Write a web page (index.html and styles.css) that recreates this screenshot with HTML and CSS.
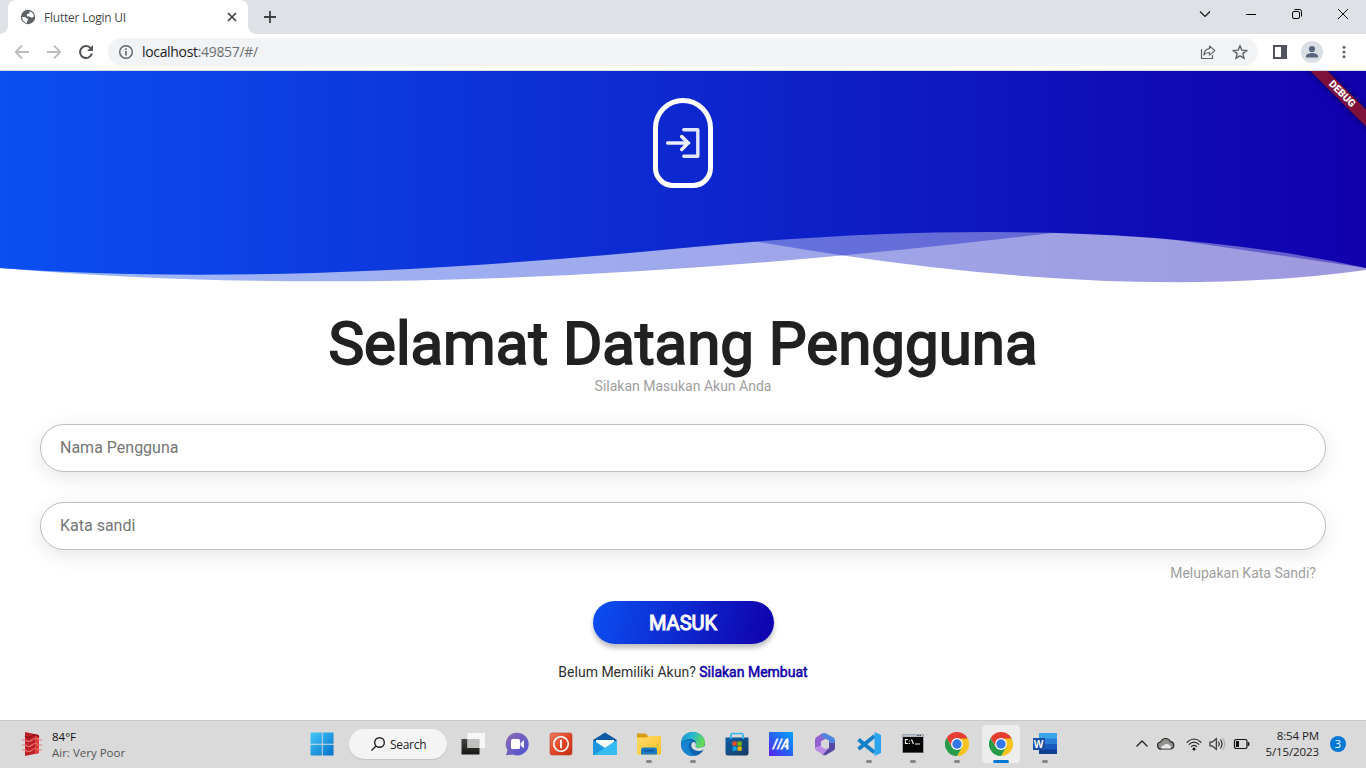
FILE: index.html
```html
<!DOCTYPE html>
<html lang="id">
<head>
<meta charset="utf-8">
<title>Flutter Login UI</title>
<link rel="stylesheet" href="styles.css">
</head>
<body>
<div class="screen">
  <div class="tabstrip">
    <div class="tab">
      <svg class="favicon" width="16" height="16" viewBox="0 0 16 16"><circle cx="8" cy="8" r="7.2" fill="#5f6368"/><path d="M2.2 8.2c1.700-.3 3.300-.1 4 .6.5.6 1.300.7 1.700 1.500.3.800-.5 1.300-.8 2.200l-.2 1.500C4.200 13.400 2.100 11 2.200 8.200zM9.500 2.300c2.300.6 4.200 2.600 4.400 5-.8 1.300-1.900 1.500-2.900 1.200-.8-.3-.7-1-1.500-1.100-1.100-.1-2 .1-2.500-.700-.6-1.100.1-1.700 1-1.900.9-.1 1.400-.1 1.500-.9z" fill="#fff"/></svg>
      <span class="tab-title">Flutter Login UI</span>
      <svg class="tab-close" width="16" height="16" viewBox="0 0 16 16"><path d="M4 4l8 8M12 4l-8 8" stroke="#3c4043" stroke-width="1.700" fill="none"/></svg>
    </div>
    <svg class="new-tab" width="16" height="16" viewBox="0 0 16 16"><path d="M8 2v12M2 8h12" stroke="#3c4043" stroke-width="1.800"/></svg>
    <div class="window-controls">
      <svg width="46" height="28" viewBox="0 0 46 28"><path d="M18 11.500l5 5 5-5" fill="none" stroke="#111" stroke-width="1.100"/></svg>
      <svg width="46" height="28" viewBox="0 0 46 28"><path d="M18 14.500h10" stroke="#000"/></svg>
      <svg width="46" height="28" viewBox="0 0 46 28"><rect x="18.500" y="11.500" width="7" height="7" rx="1.500" fill="none" stroke="#000"/><path d="M20.500 9.500h5a2 2 0 0 1 2 2v5" fill="none" stroke="#000"/></svg>
      <svg width="46" height="28" viewBox="0 0 46 28"><path d="M18 9l10 10M28 9L18 19" stroke="#111" fill="none"/></svg>
    </div>
  </div>

  <div class="toolbar">
    <svg class="nav" width="16" height="16" viewBox="0 0 16 16"><path d="M15 8H2M8 1.700L1.700 8 8 14.300" fill="none" stroke="#babcbe" stroke-width="1.800"/></svg>
    <svg class="nav" width="16" height="16" viewBox="0 0 16 16"><path d="M1 8h13M8 1.700L14.300 8 8 14.300" fill="none" stroke="#babcbe" stroke-width="1.800"/></svg>
    <svg class="nav" width="16" height="16" viewBox="0 0 16 16"><path d="M13.900 9.500A6 6 0 1 1 12.300 3.800L13.500 5" fill="none" stroke="#50545a" stroke-width="2"/><path d="M15 1v6H9z" fill="#50545a"/></svg>
    <div class="omnibox">
      <svg width="16" height="16" viewBox="0 0 16 16"><circle cx="8" cy="8" r="6.300" fill="none" stroke="#5f6368" stroke-width="1.400"/><path d="M8 7v4.500M8 4.300v1.600" stroke="#5f6368" stroke-width="1.600"/></svg>
      <span class="url">localhost<span class="url-rest">:49857/#/</span></span>
      <div class="omnibox-actions">
        <svg width="16" height="16" viewBox="0 0 16 16"><path d="M1.500 5v9.500h11V11" fill="none" stroke="#5f6368" stroke-width="1.200"/><path d="M9.500 2l5.300 4.600-5.300 4.500V8.500C7 8.400 5.100 9.300 3.900 11c.2-3.600 2.200-6 5.600-6.400z" fill="none" stroke="#5f6368" stroke-width="1.200" stroke-linejoin="round"/></svg>
        <svg width="16" height="16" viewBox="0 0 16 16"><path d="M8 1.800l1.800 4.300 4.700.4-3.600 3.100 1.100 4.600L8 11.800l-4 2.400 1.100-4.600-3.600-3.100 4.700-.4z" fill="none" stroke="#5f6368" stroke-width="1.400"/></svg>
      </div>
    </div>
    <svg class="side-panel" width="16" height="16" viewBox="0 0 16 16"><path fill="#50545a" fill-rule="evenodd" d="M1 1h14v14H1zM3 3v10h6V3z"/></svg>
    <svg class="avatar" width="22" height="22" viewBox="0 0 22 22"><circle cx="11" cy="11" r="11" fill="#dadfe5"/><circle cx="11" cy="8" r="3.100" fill="#56657b"/><path d="M5 16.500v-1.300c0-2.200 3.500-3.200 6-3.200s6 1 6 3.200v1.300z" fill="#56657b"/></svg>
    <svg class="menu" width="16" height="16" viewBox="0 0 16 16"><g fill="#5f6368"><circle cx="8" cy="3.200" r="1.500"/><circle cx="8" cy="8" r="1.500"/><circle cx="8" cy="12.800" r="1.500"/></g></svg>
  </div>

  <main class="app">
    <svg class="waves" width="1366" height="230" viewBox="0 0 1366 230">
      <defs><linearGradient id="blue" gradientUnits="userSpaceOnUse" x1="0" y1="0" x2="1366" y2="0"><stop offset="0" stop-color="#0b4ff1"/><stop offset="1" stop-color="#1000ac"/></linearGradient></defs>
      <g fill="url(#blue)">
        <path opacity=".4" d="M0 0V197Q273 217 683 157Q1093 237 1366 199V0z"/>
        <path opacity=".4" d="M0 0V197Q455 237 1093 157L1366 197V0z"/>
        <path d="M0 0V197Q273 217 683 177Q1093 137 1366 197V0z"/>
      </g>
    </svg>
    <div class="debug-banner">DEBUG</div>
    <div class="login-badge">
      <svg width="40" height="40" viewBox="0 0 40 40"><path d="M20.800 6.700H34.800V33.300H20.800" fill="none" stroke="#e2e5fc" stroke-width="3.400" stroke-linejoin="round" stroke-linecap="round"/><path d="M4.700 20H25.500M18.700 13.600l6.400 6.400-6.400 6.400" fill="none" stroke="#eef0ff" stroke-width="3.600" stroke-linecap="round"/></svg>
    </div>
    <h1 class="title">Selamat Datang Pengguna</h1>
    <p class="subtitle">Silakan Masukan Akun Anda</p>
    <div class="field">Nama Pengguna</div>
    <div class="field">Kata sandi</div>
    <div class="forgot">Melupakan Kata Sandi?</div>
    <div class="submit">MASUK</div>
    <p class="signup">Belum Memiliki Akun? <span class="signup-link">Silakan Membuat</span></p>
  </main>

  <footer class="taskbar">
    <div class="weather">
      <svg width="22" height="26" viewBox="0 0 22 26"><path d="M4 1l14 3v18L4 25z" fill="#be2027"/><path d="M14 4l4 1v17l-4 1z" fill="#df3e3e"/><path d="M1 9h3q4 3 7 0t7 0h3M1 14h3q4 3 7 0t7 0h3M1 19h3q4 3 7 0t7 0h3" fill="none" stroke="#e87474" stroke-width="1.200"/><path d="M4 5q4 3 7 0t7 1" fill="none" stroke="#8f161d" stroke-width="1.500"/></svg>
      <div class="weather-text"><div class="temp">84°F</div><div class="air">Air: Very Poor</div></div>
    </div>
    <div class="start"><svg width="24" height="24" viewBox="0 0 24 24"><defs><linearGradient id="win" x1="0" y1="0" x2="1" y2="1"><stop offset="0" stop-color="#45c8f8"/><stop offset="1" stop-color="#0070cc"/></linearGradient></defs><path fill="url(#win)" d="M1 .5h10.800v11.300H.5V1zM12.700.5h10.800v11.300H12.700zM.5 12.700h11.300v10.800H.5zM12.700 12.700h10.800v10.800H12.700z"/></svg></div>
    <div class="search">
      <svg width="16" height="16" viewBox="0 0 16 16"><circle cx="9.500" cy="6.500" r="4.800" fill="none" stroke="#222" stroke-width="1.400"/><path d="M6 10l-4.500 4.500" stroke="#222" stroke-width="1.500"/></svg>
      <span class="search-label">Search</span>
    </div>
    <div class="tasks">
      <div class="task"><svg width="24" height="24" viewBox="0 0 24 24"><defs><linearGradient id="tv" x1="0" y1="0" x2="0" y2="1"><stop offset="0" stop-color="#424340"/><stop offset="1" stop-color="#171815"/></linearGradient></defs><path fill="url(#tv)" d="M.5 7h18v15.500H.5z"/><path fill="#fafafa" d="M6.500 1H24v15H6.500z" opacity=".9"/><path fill="#bfc1be" d="M6.500 7h12v9h-12z"/></svg></div>
      <div class="task"><svg width="24" height="24" viewBox="0 0 24 24"><defs><linearGradient id="chat" x1="0" y1="0" x2="1" y2="1"><stop offset="0" stop-color="#8e6bb2"/><stop offset="1" stop-color="#4c54d4"/></linearGradient></defs><path fill="url(#chat)" d="M12 .8a11.300 11.300 0 1 1-4 21.700L1 23.200l1.500-5A11.300 11.300 0 0 1 12 .8z"/><rect x="6" y="7" width="9" height="10" rx="1.500" fill="#fff"/><path d="M15.500 11l3.500-3v8.500l-3.500-3z" fill="#eef"/></svg></div>
      <div class="task"><svg width="24" height="24" viewBox="0 0 24 24"><defs><linearGradient id="red" x1="0" y1="0" x2="1" y2="1"><stop offset="0" stop-color="#f07a5a"/><stop offset=".6" stop-color="#dc3f20"/><stop offset="1" stop-color="#c33114"/></linearGradient></defs><rect x="1" y="1" width="22" height="22" rx="2" fill="url(#red)" stroke="#b94331" stroke-width=".6"/><circle cx="12" cy="12" r="7.200" fill="none" stroke="#fff" stroke-width="1.600"/><path d="M12 7.700v8.600" stroke="#fff" stroke-width="1.800"/></svg></div>
      <div class="task"><svg width="24" height="24" viewBox="0 0 24 24"><path fill="#0c59a5" d="M0 8L12 .5 24 8v5H0z"/><path fill="#f5fbff" d="M3 8h18v8H3z"/><path fill="#1d97df" d="M0 8l12 8 12-8v15H0z"/><path fill="#35bdf3" d="M24 8v15H1l11-7z"/></svg></div>
      <div class="task running"><svg width="24" height="24" viewBox="0 0 24 24"><defs><linearGradient id="fold" x1="0" y1="0" x2="1" y2="1"><stop offset="0" stop-color="#ffdc69"/><stop offset="1" stop-color="#fcc027"/></linearGradient></defs><path fill="#dc9b0c" d="M0 1.500h8.500L11 4v4H0z"/><path fill="url(#fold)" d="M0 5.500h9L12 4h12v18.500H0z"/><path fill="#197bc4" d="M4 22.500V18q0-2.500 2.500-2.500h11Q20 15.500 20 18v4.500z"/><path fill="#0b559a" d="M7 18h10v1.500H7z"/></svg></div>
      <div class="task running"><svg width="24" height="24" viewBox="0 0 24 24"><defs><linearGradient id="edge" x1="0" y1="0" x2="1" y2=".3"><stop offset="0" stop-color="#178cd4"/><stop offset=".5" stop-color="#27b9d2"/><stop offset="1" stop-color="#64d958"/></linearGradient></defs><circle cx="12" cy="12" r="12" fill="#0d62ad"/><path fill="url(#edge)" d="M0 12C0 4.700 5 0 12 0s12 5.500 12 10.500c0 3.700-2.800 5.500-6 5.500-3 0-4-1-3.300-2.500C15.800 11 14.500 7 9.500 7 4.500 7 1 9.200 0 12z"/><path fill="#1583cf" d="M0 12c1.500-4 8-4.700 11.500-2.500C8.500 10.500 7 13 8 16.500c1 3.600 3.500 6 6 7.200C6.500 25 0 19.500 0 12z"/><path fill="#dddedd" d="M12 10c2.500 0 3.500 1.700 2.700 3.500C14 15 15 16 18 16c2.500 0 4.500-1 5.800-2.500l.2 3-2 1.500C18.500 19.800 12 19 10.500 15 9.800 12.800 10.500 11 12 10z"/></svg></div>
      <div class="task"><svg width="24" height="24" viewBox="0 0 24 24"><defs><linearGradient id="store" x1="0" y1="0" x2="1" y2="1"><stop offset="0" stop-color="#0c60a7"/><stop offset="1" stop-color="#173a63"/></linearGradient></defs><path fill="url(#store)" d="M.5 5.500h23V21q0 2.500-2.500 2.500H3Q.5 23.500.5 21z"/><path d="M6 7V3q0-1.500 1.500-1.500h9Q18 1.500 18 3v4" fill="none" stroke="#30b5e8" stroke-width="1.700"/><path fill="#f25022" d="M7.500 9.500h4.200v4.200H7.500z"/><path fill="#7fba00" d="M12.500 9.500h4.200v4.200h-4.200z"/><path fill="#00a4ef" d="M7.500 14.500h4.200v4.200H7.500z"/><path fill="#ffb900" d="M12.500 14.500h4.200v4.200h-4.200z"/></svg></div>
      <div class="task"><svg width="24" height="24" viewBox="0 0 24 24"><defs><linearGradient id="asus" x1="0" y1="1" x2="1" y2="0"><stop offset="0" stop-color="#5a20f0"/><stop offset=".5" stop-color="#2463f4"/><stop offset="1" stop-color="#06a4fa"/></linearGradient></defs><path fill="url(#asus)" d="M0 0h24v24H0z"/><path fill="#dce7ff" d="M7.500 6.500h2.300L5 17.500H2.700zM12 6.500h2.300L9.500 17.500H7.200z"/><path fill="#fff" d="M17 6.500h2.500v11h-2.300v-2.200h-2.200L16 13.300h1.200V10l-3.700 7.500h-2.300z"/></svg></div>
      <div class="task"><svg width="24" height="24" viewBox="0 0 24 24"><path fill="#8f62cf" d="M9 1.500L3.500 5Q2 6 2 8v8.200l6 1.800V9.500l7-4.300z"/><path fill="#4f85dc" d="M9 1.500q2-1 4 0l7.500 4Q22 6.500 22 8v6l-6-1.500V8.500L9 5z"/><path fill="#5647a2" d="M22 11v5.500q0 1.200-1 1.800l-8 4.700q-1.500.7-3-.2l-2-2 8-4.800V11z"/><path fill="#bc8be4" d="M2 15.500l6-2.200 4 3.700 4-1-6 6.500L3 18.500q-1-.8-1-3z"/><circle cx="12" cy="12" r="4" fill="#d7d7d9"/></svg></div>
      <div class="task running"><svg width="24" height="24" viewBox="0 0 24 24"><path d="M17.500 4L1.500 17M1.500 7.500L17.500 20.500" stroke="#1480c8" stroke-width="3.800"/><path fill="#2aa5ed" d="M17.500 0L24 3v18l-6.500 3z"/></svg></div>
      <div class="task running"><svg width="24" height="24" viewBox="0 0 24 24"><path fill="#9aa3ad" d="M1 2h22v19H1z"/><path fill="#b8c1cb" d="M2 2.800h20v2H2z"/><path fill="#050505" d="M2 5h20v15.500H2z"/><path d="M16 3.500h1.500M18.500 3.500H20" stroke="#445"/><path d="M7 7.500H4.500v4H7M8.500 8.500v1M8.500 11v1M10.500 7.500l2 4.500M14 12h5" fill="none" stroke="#eee" stroke-width="1.200"/></svg></div>
      <div class="task running"><svg width="24" height="24" viewBox="0 0 24 24"><g id="chrome"><path fill="#e43e33" d="M1.600 6A12 12 0 0 1 22.400 6L12 12z"/><path fill="#f9c31d" d="M22.400 6A12 12 0 0 1 12 24l5-9L12 6.500z"/><path fill="#269b49" d="M1.600 6A12 12 0 0 0 12 24l5.200-9L12 12l-5.200 3z"/><path fill="#e43e33" d="M1.600 6L6.500 14 12 12l1-5.500h9.400L20 3z"/><circle cx="12" cy="12" r="5.900" fill="#fff"/><circle cx="12" cy="12" r="4.700" fill="#3478e7"/></g></svg></div>
      <div class="task active"><svg width="24" height="24" viewBox="0 0 24 24"><use href="#chrome"/></svg></div>
      <div class="task running"><svg width="24" height="24" viewBox="0 0 24 24"><path fill="#3aa4e9" d="M6 1h18v6H6z"/><path fill="#2a7ed8" d="M6 6.500h18V12H6z"/><path fill="#185abd" d="M6 12h18v6H6z"/><path fill="#103f91" d="M6 17.500h18V22H6z"/><path fill="#174ea6" d="M0 6h12v12H0z"/><text class="word-letter" x=".8" y="15.700">W</text></svg></div>
    </div>
    <div class="tray">
      <svg width="14" height="16" viewBox="0 0 14 16"><path d="M1.500 10.500L7 5l5.500 5.500" fill="none" stroke="#222" stroke-width="1.300"/></svg>
      <svg class="cloud" width="18" height="16" viewBox="0 0 18 16"><path d="M4.500 13a3.500 3.500 0 0 1-.8-7Q5 2.500 8.700 2.500q3.500 0 4.600 3.200a3.700 3.700 0 0 1 .6 7.300z" fill="#92928f" stroke="#292929" stroke-width="1.200"/><path d="M4.500 12.500q-1-2.300 2-3L9 7.800q3 0 5 3l-.5 1.700z" fill="#e8e8e8"/></svg>
      <svg class="wifi" width="16" height="16" viewBox="0 0 16 16"><g fill="none" stroke="#222" stroke-width="1.100"><path d="M.7 6.500q7.300-7 14.600 0M2.800 8.700q5.200-5 10.400 0M5 10.900q3-3 6 0"/></g><circle cx="8" cy="13" r="1.500" fill="#111"/></svg>
      <svg class="volume" width="17" height="16" viewBox="0 0 17 16"><path d="M1 6h2.500L7.300 2.700v10.600L3.500 10H1zM9.500 5.500q1.600 2.500 0 5M11.500 3.500q3 4.500 0 9" fill="none" stroke="#222" stroke-width="1.100"/><path d="M13.600 1.800q4 6.200 0 12.400" fill="none" stroke="#aaa"/></svg>
      <svg class="battery" width="17" height="16" viewBox="0 0 17 16"><rect x="1.500" y="3.500" width="12.500" height="9" rx="1.800" fill="none" stroke="#111" stroke-width="1.200"/><path d="M3 5h3v6H3z" fill="#111"/><path d="M15.500 6.200v3.600" stroke="#111" stroke-width="1.600"/></svg>
    </div>
    <div class="clock"><div class="time">8:54 PM</div><div class="date">5/15/2023</div></div>
    <div class="notice">3</div>
  </footer>
</div>
</body>
</html>
```
FILE: styles.css
```css
* { box-sizing: border-box; }
body { margin: 0; font-family: "Open Sans", "Noto Sans", sans-serif; }
svg { display: block; flex: none; }
.screen { width: 1366px; height: 768px; overflow: hidden; display: flex; flex-direction: column; background: #fff; white-space: nowrap; }

.tabstrip { height: 34px; flex: none; background: #dee1e6; display: flex; padding-left: 8px; }
.tab { position: relative; width: 240px; height: 34px; background: #fff; border-radius: 8px 8px 0 0; display: flex; align-items: center; padding-left: 12px; }
.tab::before, .tab::after { content: ""; position: absolute; bottom: 0; width: 8px; height: 8px; }
.tab::before { left: -8px; background: radial-gradient(circle at 0 0, #dee1e6 7.5px, #fff 8px); }
.tab::after { right: -8px; background: radial-gradient(circle at 100% 0, #dee1e6 7.5px, #fff 8px); }
.tab-title { margin-left: 8px; width: 180px; font-size: 12px; letter-spacing: -0.22px; color: #45494d; }
.new-tab { margin: 9px 0 0 14px; }
.window-controls { margin-left: auto; display: flex; }

.toolbar { height: 37px; flex: none; display: flex; align-items: center; padding: 0 14px; border-bottom: 1px solid #d8dbe0; }
.nav { margin-right: 16px; }
.omnibox { width: 1150px; height: 28px; margin-left: -2px; flex: none; border-radius: 14px; background: #f1f3f4; display: flex; align-items: center; padding: 0 10px; }
.url { margin-left: 8px; margin-top: -2px; font-size: 14px; letter-spacing: -0.33px; color: #202124; }
.url-rest { color: #6b6f74; }
.omnibox-actions { margin-left: auto; display: flex; gap: 16px; }
.side-panel { margin-left: 14px; }
.avatar { margin-left: 13px; }
.menu { margin-left: 13px; }

.app { position: relative; height: 649px; flex: none; overflow: hidden; display: flex; flex-direction: column; align-items: center; font-family: Roboto, sans-serif; }
.waves { position: absolute; left: 0; top: 0; }
.debug-banner { position: absolute; right: -46px; top: 17px; width: 140px; height: 12px; line-height: 12.500px; transform: rotate(45deg); background: #7d1139; box-shadow: 0 0 6px rgba(0,0,0,.5); color: #fff; text-align: center; font-size: 10.200px; font-weight: 900; }
.login-badge { position: relative; margin-top: 27px; width: 60px; height: 90px; border: 5px solid #fff; border-radius: 30px 30px 20px 20px; display: flex; align-items: center; justify-content: center; flex: none; }
.title { margin: 121px 0 0; height: 69px; line-height: 70px; font-size: 60px; font-weight: 400; color: #212121; -webkit-text-stroke: 1.900px #212121; }
.subtitle { margin: 0; height: 16px; line-height: 16px; font-size: 14px; color: #9e9e9e; }
.field { width: 1286px; height: 48px; flex: none; border: 1px solid #bdbdbd; border-radius: 24px; background: #fff; box-shadow: 0 5px 20px rgba(0,0,0,.1); padding-left: 19px; line-height: 46px; font-size: 16px; color: #757575; }
.subtitle + .field { margin-top: 30px; }
.field + .field { margin-top: 30px; }
.forgot { align-self: flex-end; margin: 15px 50px 0 0; height: 16px; line-height: 16px; font-size: 14px; color: #9e9e9e; }
.submit { margin-top: 20px; width: 181px; height: 43px; flex: none; border-radius: 22px; background: linear-gradient(103.300deg, #0b4ff1, #1000ac); box-shadow: 0 4px 5px rgba(0,0,0,.26); color: #fff; font-size: 20px; line-height: 45px; text-align: center; -webkit-text-stroke: 1px #fff; }
.signup { margin: 20px 0 0; height: 16px; line-height: 16px; font-size: 14px; color: #303030; }
.signup-link { color: #1000ac; -webkit-text-stroke: .5px #1000ac; }

.taskbar { height: 48px; margin-top: auto; flex: none; display: flex; align-items: center; background: #dadada; box-shadow: inset 0 1px #c9c9c9; }
.weather { width: 300px; padding-left: 21px; display: flex; align-items: center; font-size: 11.500px; line-height: 16px; letter-spacing: 0; }
.weather-text { margin: 2px 0 0 9px; }
.temp { color: #111; }
.air { color: #555; }
.start { width: 44px; display: flex; justify-content: center; }
.search { width: 98px; height: 30px; margin-left: 5px; border-radius: 15px; background: #f4f4f4; box-shadow: 0 1px 1px rgba(0,0,0,.12); display: flex; align-items: center; padding-left: 21px; font-size: 12px; letter-spacing: -0.3px; color: #222; }
.search-label { margin-left: 4px; }
.tasks { margin-left: 4px; display: flex; }
.task { position: relative; width: 44px; height: 48px; display: flex; align-items: center; justify-content: center; }
.task svg { position: relative; }
.running::after, .active::after { content: ""; position: absolute; bottom: 5px; width: 6px; height: 3px; border-radius: 2px; background: #858585; }
.active::before { content: ""; position: absolute; left: 3px; top: 5px; width: 38px; height: 38px; border-radius: 4px; background: #ededed; }
.active::after { width: 16px; background: #0078d4; }
.word-letter { font: bold 10px "Open Sans", sans-serif; fill: #fff; }
.tray { margin-left: 68px; display: flex; align-items: center; }
.cloud { margin-left: 8px; }
.wifi { margin-left: 11px; }
.volume { margin-left: 7px; }
.battery { margin-left: 7px; }
.clock { width: 69px; text-align: right; font-size: 11.500px; line-height: 16px; letter-spacing: -0.1px; color: #1b1b1b; }
.notice { margin-left: 11px; width: 16px; height: 16px; border-radius: 50%; background: #0078d4; color: #fff; font-size: 11px; line-height: 16px; text-align: center; }
```
